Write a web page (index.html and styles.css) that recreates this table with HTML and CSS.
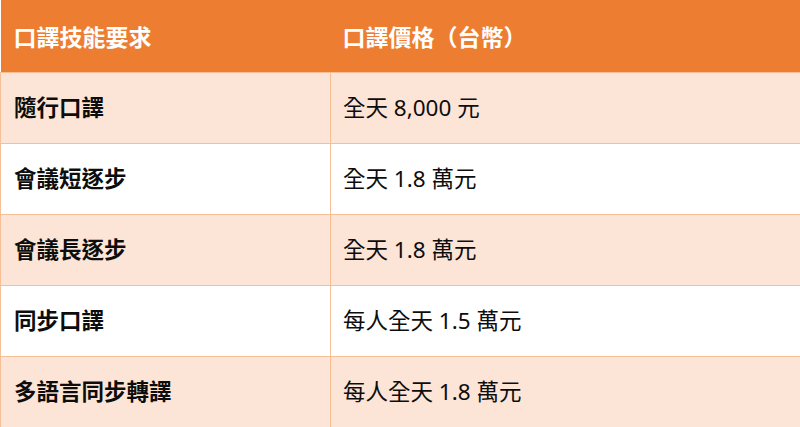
FILE: index.html
```html
<!DOCTYPE html>
<html lang="zh-Hant">
<head>
<meta charset="utf-8">
<link rel="stylesheet" href="styles.css">
</head>
<body>
<table class="price-table">
  <colgroup><col class="c1"><col class="c2"></colgroup>
  <thead>
    <tr><th>口譯技能要求</th><th>口譯價格（台幣）</th></tr>
  </thead>
  <tbody>
    <tr class="tint"><td class="skill">隨行口譯</td><td>全天 8,000 元</td></tr>
    <tr><td class="skill">會議短逐步</td><td>全天 1.8 萬元</td></tr>
    <tr class="tint"><td class="skill">會議長逐步</td><td>全天 1.8 萬元</td></tr>
    <tr><td class="skill">同步口譯</td><td>每人全天 1.5 萬元</td></tr>
    <tr class="tint"><td class="skill">多語言同步轉譯</td><td>每人全天 1.8 萬元</td></tr>
  </tbody>
</table>
</body>
</html>
```
FILE: styles.css
```css
html, body {
  margin: 0;
  padding: 0;
  background: #ffffff;
}
.price-table {
  width: 800px;
  table-layout: fixed;
  border-collapse: collapse;
  font-family: "Noto Sans", "Noto Sans CJK TC", sans-serif;
  font-size: 22.5px;
  color: #0d0d0d;
}
.c1 { width: 330px; }
.c2 { width: 470px; }
.price-table th {
  height: 72px;
  padding: 0 0 0 13px;
  text-align: left;
  background: #ed7d31;
  color: #ffffff;
  font-size: 23px;
  font-weight: 700;
  border: none;
  box-sizing: border-box;
}
.price-table th + th { padding-left: 12px; }
.price-table td {
  height: 71px;
  padding: 0 0 0 13px;
  border: 1px solid #f7bf96;
  box-sizing: border-box;
  font-weight: 400;
  line-height: 1.2;
}
.price-table td + td { padding-left: 12px; }
.price-table td.skill { font-weight: 700; }
.tint td { background: #fce4d6; }
```
